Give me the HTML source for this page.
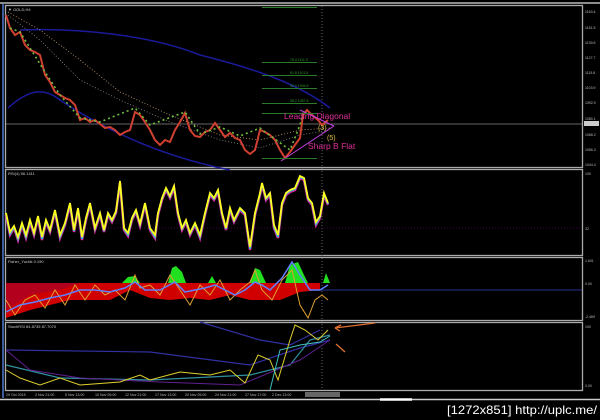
<!DOCTYPE html>
<html><head><meta charset="utf-8"><style>
html,body{margin:0;padding:0;background:#000;width:600px;height:420px;overflow:hidden}
svg{display:block}
text{font-family:"Liberation Sans",sans-serif}
</style></head><body>
<svg width="600" height="420" viewBox="0 0 600 420">
<rect width="600" height="420" fill="#000"/>
<!-- frame -->
<line x1="0" y1="3" x2="600" y2="3" stroke="#bbb" stroke-width="1.5"/>
<line x1="3" y1="4" x2="3" y2="398" stroke="#3a5a9a" stroke-width="2"/>
<g fill="none" stroke="#aaa" stroke-width="1.3">
<rect x="5.5" y="5.5" width="577" height="162"/>
<rect x="5.5" y="169.5" width="577" height="86"/>
<rect x="5.5" y="257.5" width="577" height="63"/>
<rect x="5.5" y="322.5" width="577" height="68"/>
</g>
<line x1="0" y1="399.5" x2="600" y2="399.5" stroke="#ccc" stroke-width="1.5"/>
<line x1="380" y1="399.5" x2="412" y2="399.5" stroke="#fff" stroke-width="2.5"/>
<line x1="322" y1="6" x2="322" y2="390" stroke="#666" stroke-dasharray="1,2"/>
<!-- main pane -->
<text x="8" y="11" fill="#ccc" font-size="4">▼ GOLD,H4</text>
<line x1="6" y1="124" x2="582" y2="124" stroke="#888" stroke-width="0.8"/>
<path d="M8,108 C30,88 45,88 60,100 C120,140 180,160 230,170" stroke="#1a1a9a" fill="none" stroke-width="1.5"/>
<path d="M20,30 C80,28 150,35 200,55 C260,70 300,85 330,108" stroke="#1a1a9a" fill="none" stroke-width="1.5"/>
<path d="M8,12 L40,30 L80,60 L120,92 L170,115 L220,135 L260,140 L300,130 L330,128" stroke="#c8a070" fill="none" stroke-dasharray="1,2" stroke-width="0.8"/>
<path d="M8,15 L40,40 L80,80 L120,100 L170,122 L220,140 L260,148 L300,135 L330,130" stroke="#888" fill="none" stroke-dasharray="1,2" stroke-width="0.8"/>
<path d="M6,15 L10,28 L15,35 L20,32 L25,45 L30,50 L35,52 L40,55 L45,75 L50,82 L55,92 L60,95 L65,98 L70,100 L75,105 L80,120 L85,118 L90,122 L95,120 L100,124 L105,128 L110,127 L115,130 L120,135 L125,132 L130,130 L135,112 L140,115 L145,122 L150,130 L155,140 L160,145 L165,140 L170,142 L175,130 L180,122 L185,113 L190,130 L195,136 L200,137 L205,132 L210,130 L215,123 L220,130 L225,137 L230,133 L235,138 L240,140 L245,150 L250,154 L255,150 L260,130 L265,132 L270,135 L275,140 L280,150 L285,158 L290,152 L295,145 L300,138 L303,115 L307,110 L312,115 L318,120 L322,125 L328,120" stroke="#d04030" fill="none" stroke-width="2"/>
<path d="M10,28 L20,32 L30,48 L45,72 L60,95 L80,118 L100,122 L135,108 L150,125 L185,112 L200,134 L220,127 L240,136 L260,128 L265,132 L290,150 L300,125 L303,112" stroke="#70c040" fill="none" stroke-width="1.6" stroke-dasharray="2,3"/>
<line x1="281" y1="161" x2="334" y2="126" stroke="#c040e0" stroke-width="1"/>
<line x1="300" y1="110" x2="334" y2="126" stroke="#c040e0" stroke-width="1"/>
<g font-size="3.5">
<rect x="262" y="7" width="55" height="1" fill="#2a7a2a"/>
<rect x="262" y="62" width="55" height="1" fill="#2a7a2a"/>
<rect x="262" y="75" width="55" height="1" fill="#2a7a2a"/>
<rect x="262" y="88" width="55" height="1" fill="#2a7a2a"/>
<rect x="262" y="103" width="55" height="1" fill="#2a7a2a"/>
<rect x="262" y="113" width="55" height="1" fill="#2a7a2a"/>
<rect x="262" y="158" width="55" height="1" fill="#2a7a2a"/>
<text x="290" y="61" fill="#2c9a2c">76.4 1111.0</text>
<text x="290" y="74" fill="#2c9a2c">61.8 1101.5</text>
<text x="290" y="87" fill="#2c9a2c">50.0 1094.5</text>
<text x="290" y="102" fill="#2c9a2c">38.2 1087.6</text>
</g>
<text x="284" y="119" fill="#e0309a" font-size="8.5">Leading Diagonal</text>
<text x="308" y="149" fill="#e0309a" font-size="8.5">Sharp B Flat</text>
<text x="318" y="130" fill="#e0c040" font-size="7">(3)</text>
<text x="327" y="140" fill="#e0c040" font-size="7">(5)</text>
<g fill="#bbb" font-size="3.5">
<text x="585" y="13">1163.4</text><text x="585" y="29">1151.5</text><text x="585" y="44">1139.6</text><text x="585" y="59">1127.7</text><text x="585" y="74">1115.8</text><text x="585" y="89">1103.9</text><text x="585" y="104">1092.0</text><text x="585" y="120">1080.1</text><text x="585" y="136">1068.2</text><text x="585" y="151">1056.3</text><text x="585" y="166">1044.4</text>
<rect x="584" y="121" width="15" height="5" fill="#ccc"/>
</g>
<!-- RSI -->
<text x="8" y="175" fill="#ccc" font-size="4">RSI(4) 56.1411</text>
<text x="585" y="175" fill="#bbb" font-size="3.5">100</text>
<text x="585" y="230" fill="#bbb" font-size="3.5">32</text>
<line x1="6" y1="228" x2="582" y2="228" stroke="#400040" stroke-dasharray="1,2"/>
<path d="M6,215 L10,235 L14,228 L18,240 L22,225 L26,238 L30,222 L34,235 L38,218 L42,240 L46,222 L50,232 L55,212 L60,238 L65,225 L70,205 L74,232 L78,210 L82,240 L86,220 L90,205 L95,230 L100,215 L104,232 L108,215 L112,222 L116,213 L120,183 L124,230 L128,236 L132,220 L136,212 L140,226 L145,205 L150,230 L155,238 L158,215 L162,200 L166,190 L170,198 L174,188 L178,215 L182,230 L186,222 L190,235 L195,225 L200,238 L205,215 L210,195 L214,200 L218,192 L222,215 L226,230 L230,210 L234,222 L240,210 L245,215 L250,250 L255,215 L260,195 L262,185 L266,200 L270,195 L274,228 L278,238 L282,205 L286,195 L290,192 L295,190 L300,178 L304,180 L308,200 L312,205 L316,225 L320,218 L324,195 L328,205" stroke="#e0209a" fill="none" stroke-width="2.5"/>
<path d="M6,214 L10,234 L14,227 L18,239 L22,224 L26,237 L30,221 L34,234 L38,217 L42,239 L46,221 L50,231 L55,211 L60,237 L65,224 L70,204 L74,231 L78,209 L82,239 L86,219 L90,204 L95,229 L100,214 L104,231 L108,214 L112,221 L116,212 L120,182 L124,229 L128,235 L132,219 L136,211 L140,225 L145,204 L150,229 L155,237 L158,214 L162,199 L166,189 L170,197 L174,187 L178,214 L182,229 L186,221 L190,234 L195,224 L200,237 L205,214 L210,194 L214,199 L218,191 L222,214 L226,229 L230,209 L234,221 L240,209 L245,214 L250,249 L255,214 L260,194 L262,184 L266,199 L270,194 L274,227 L278,237 L282,204 L286,194 L290,191 L295,189 L300,177 L304,179 L308,199 L312,204 L316,224 L320,217 L324,194 L328,204" stroke="#30b0e0" fill="none" stroke-width="1.8"/>
<path d="M6,213 L10,232 L14,226 L18,237 L22,223 L26,235 L30,220 L34,233 L38,216 L42,237 L46,220 L50,230 L55,210 L60,235 L65,223 L70,203 L74,230 L78,208 L82,237 L86,218 L90,203 L95,228 L100,213 L104,230 L108,213 L112,220 L116,211 L120,181 L124,228 L128,233 L132,218 L136,210 L140,224 L145,203 L150,228 L155,235 L158,213 L162,198 L166,188 L170,196 L174,186 L178,213 L182,228 L186,220 L190,233 L195,223 L200,235 L205,213 L210,193 L214,198 L218,190 L222,213 L226,228 L230,208 L234,220 L240,208 L245,213 L250,247 L255,213 L260,193 L262,183 L266,198 L270,193 L274,225 L278,235 L282,203 L286,193 L290,190 L295,188 L300,176 L304,178 L308,198 L312,203 L316,222 L320,216 L324,193 L328,203" stroke="#ffff20" fill="none" stroke-width="1.8"/>
<!-- Fisher -->
<text x="8" y="263" fill="#ccc" font-size="4">Fisher_Yur4ik 0.190</text>
<g fill="#bbb" font-size="3.5"><text x="585" y="262">1.601</text><text x="585" y="285">0.00</text><text x="585" y="318">-2.469</text></g>
<line x1="6" y1="290" x2="582" y2="290" stroke="#3040c0" stroke-width="0.8"/>
<path d="M6,283 L320,283 L320,290 L300,292 L280,300 L250,300 L230,295 L210,300 L190,298 L170,300 L150,298 L130,290 L110,300 L90,300 L70,300 L50,305 L30,310 L6,318 Z" fill="#d00000"/>
<path d="M6,283 L6,310 L30,295 L60,290 L80,283 Z" fill="#a00030" opacity="0.6"/>
<path d="M122,283 L128,277 L135,276 L140,283 Z M168,283 L172,268 L176,266 L182,272 L186,283 Z M208,283 L212,276 L216,283 Z M250,283 L255,268 L260,270 L266,283 Z M285,283 L290,265 L298,262 L304,275 L308,283 Z M323,283 L326,273 L330,283 Z" fill="#20e020"/>
<path d="M6,300 L15,315 L25,300 L35,295 L45,308 L55,290 L65,305 L75,285 L85,300 L95,285 L105,295 L115,290 L125,300 L135,275 L140,288 L150,285 L160,295 L170,275 L180,290 L190,305 L200,285 L210,295 L220,280 L230,300 L240,290 L250,282 L255,270 L262,290 L272,300 L282,280 L292,270 L300,305 L308,318 L315,300 L322,295 L328,300" stroke="#e0a030" fill="none" stroke-width="1"/>
<path d="M6,312 L20,305 L35,302 L50,298 L65,295 L80,290 L95,290 L110,292 L125,288 L135,282 L145,290 L160,290 L175,282 L185,292 L195,290 L205,288 L215,285 L225,290 L235,295 L245,290 L255,282 L262,285 L270,290 L282,278 L292,262 L300,275 L310,290 L320,290 L328,285" stroke="#6080ff" fill="none" stroke-width="1.5"/>
<!-- Stoch -->
<text x="8" y="328" fill="#ccc" font-size="4">StochRSI 84.8735 87.7070</text>
<g fill="#bbb" font-size="3.5"><text x="585" y="328">100</text><text x="585" y="387">0.00</text></g>
<path d="M6,350 L150,352 L250,365 L300,348 L330,340" stroke="#3030a0" fill="none" stroke-width="1.2"/>
<path d="M200,322 L260,340 L290,345 L320,330" stroke="#3030a0" fill="none" stroke-width="1.2"/>
<path d="M6,365 L60,378 L150,380 L250,375 L290,365 L310,340 L330,335" stroke="#3090a0" fill="none" stroke-width="1.2"/>
<path d="M6,350 L30,370 L80,378 L160,382 L240,385 L300,360 L330,340" stroke="#602090" fill="none" stroke-width="1"/>
<path d="M6,370 L20,378 L40,385 L60,378 L80,385 L120,382 L140,375 L150,380 L180,372 L210,375 L230,370 L245,383 L258,355 L270,360 L278,380 L290,340 L295,325 L305,330 L318,340 L328,330" stroke="#e0d030" fill="none" stroke-width="1"/>
<path d="M270,390 L280,350 L300,345 L320,342 L330,336" stroke="#40c0c0" fill="none" stroke-width="1"/>
<line x1="335" y1="328" x2="375" y2="323" stroke="#e07030" stroke-width="1.3"/>
<path d="M335,328 L341,325 M335,328 L340,331" stroke="#e07030" stroke-width="1.3"/>
<line x1="336" y1="344" x2="345" y2="352" stroke="#e07030" stroke-width="1.3"/>
<!-- time axis -->
<g fill="#bbb" font-size="3.6">
<text x="6" y="396">29 Oct 2015</text><text x="35" y="396">2 Nov 21:00</text><text x="65" y="396">5 Nov 13:00</text><text x="95" y="396">10 Nov 05:00</text><text x="125" y="396">12 Nov 21:00</text><text x="155" y="396">17 Nov 13:00</text><text x="185" y="396">20 Nov 05:00</text><text x="215" y="396">24 Nov 21:00</text><text x="245" y="396">27 Nov 17:00</text><text x="272" y="396">2 Dec 13:00</text>
</g>
<rect x="305" y="392" width="35" height="5" fill="#666"/>
<text x="447" y="414" fill="#fff" font-size="12" textLength="150" lengthAdjust="spacingAndGlyphs" font-family="Liberation Mono">[1272x851] http://uplc.me/</text>
</svg>
</body></html>
